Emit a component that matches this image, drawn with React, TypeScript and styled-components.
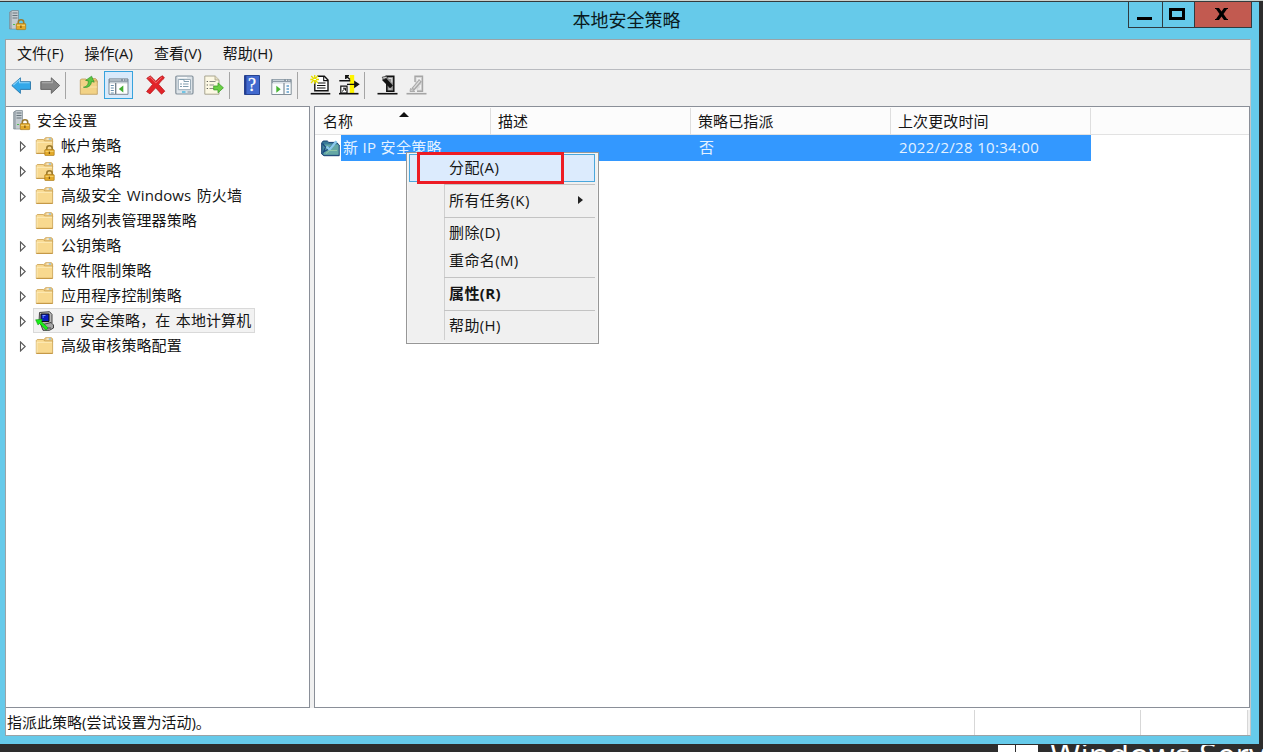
import React from "react";
import styled, { createGlobalStyle } from "styled-components";

const GlobalStyle = createGlobalStyle`
  * {
    box-sizing: border-box;
  }
  body {
    margin: 0;
    overflow: hidden;
    background-color: #2d2d2d;
    font-family: "Open Sans", "Noto Sans CJK SC", sans-serif;
    font-size: 15px;
    color: #151515;
  }
  svg {
    display: block;
    flex: none;
  }
`;

const Desktop = styled.div`
  position: relative;
  width: 1263px;
  height: 752px;
  overflow: hidden;
  background-color: #2d2d2d;
  border-top: 1px solid #cbd0cb;
`;

const Window = styled.div`
  display: flex;
  flex-direction: column;
  width: 1259px;
  height: 743px;
  padding: 0 8px 8px 5px;
  background-color: #66caea;
  border-top: 1px solid #343a3c;
`;

const TitleBar = styled.header`
  display: grid;
  grid-template-columns: 124px 1fr 124px;
  height: 37px;
  flex: none;
  margin-right: -1px;
`;

const TitleIcon = styled.div`
  padding: 8px 0 0 4px;
`;

const Title = styled.h1`
  margin: 0;
  padding-right: 4px;
  font-size: 18px;
  font-weight: 400;
  line-height: 37px;
  text-align: center;
  color: #0a1a20;
`;

const Controls = styled.div`
  display: flex;
  height: 26px;
  border: 1px solid #2f3b40;
  border-top: none;
`;

const Control = styled.button<{ $width: number; $close?: boolean }>`
  display: flex;
  align-items: center;
  justify-content: center;
  width: ${(props) => props.$width}px;
  padding: 0 3px 2px 0;
  border: none;
  border-left: ${(props) => (props.$width === 33 ? "none" : "1px solid #2f3b40")};
  background-color: ${(props) => (props.$close ? "#c25a50" : "transparent")};
`;

const Frame = styled.div`
  display: flex;
  flex-direction: column;
  flex: 1;
  min-height: 0;
  border: 1px solid #9ba3a7;
  border-right-color: #c3c7c9;
  background-color: #f0f0f0;
`;

const MenuBar = styled.nav`
  display: flex;
  align-items: center;
  gap: 21px;
  height: 30px;
  flex: none;
  padding: 0 0 2px 11px;
  border-bottom: 1px solid #b9bbc0;
`;

const MenuName = styled.span`
  font-size: 15px;
  line-height: 27px;
`;

const Toolbar = styled.div`
  display: flex;
  height: 36px;
  flex: none;
  padding: 1px 0 0 1px;
`;

const ToolButton = styled.div<{ $active?: boolean; $gap?: number }>`
  display: flex;
  align-items: center;
  justify-content: center;
  width: 29px;
  height: 28px;
  flex: none;
  margin-left: ${(props) => props.$gap ?? 0}px;
  background-color: ${(props) => (props.$active ? "#d8eafb" : "transparent")};
  box-shadow: ${(props) => (props.$active ? "inset 0 0 0 1px #37a3dd" : "none")};
`;

const ToolDivider = styled.div<{ $before?: number; $after?: number }>`
  width: 1px;
  height: 27px;
  flex: none;
  margin: 1px ${(props) => props.$after ?? 8}px 0 ${(props) => props.$before ?? 0}px;
  background-color: #a5a5a5;
`;

const Panes = styled.div`
  display: grid;
  grid-template-columns: 304px 1fr;
  column-gap: 4px;
  flex: 1;
  min-height: 0;
`;

const Tree = styled.aside`
  padding-top: 1px;
  border: 1px solid #8a8f98;
  border-left: none;
  background-color: #fff;
`;

const TreeRow = styled.div<{ $root?: boolean }>`
  display: flex;
  align-items: center;
  height: 25px;
  padding-left: ${(props) => (props.$root ? 7 : 13)}px;
`;

const Arrow = styled.div`
  width: 14px;
  padding-top: 2px;
  flex: none;
`;

const TreeLabel = styled.div<{ $selected?: boolean; $root?: boolean }>`
  display: flex;
  align-items: center;
  gap: 6px;
  height: 25px;
  padding: 0 4px 0 ${(props) => (props.$root ? 0 : 2)}px;
  word-spacing: 1.4px;
  letter-spacing: 0.1px;
  white-space: nowrap;
  background-color: ${(props) => (props.$selected ? "#f2f2f2" : "transparent")};
  box-shadow: ${(props) => (props.$selected ? "inset 0 0 0 1px #d9d9d9" : "none")};
`;

const TreeText = styled.span`
  padding-bottom: 2px;
`;

const List = styled.main`
  position: relative;
  border: 1px solid #8a8f98;
  background-color: #fff;
`;

const Columns = styled.div`
  display: grid;
  grid-template-columns: 175px 200px 200px 200px 1fr;
  height: 28px;
  padding: 1px 1px 0;
  border-bottom: 1px solid #e2e2e2;
  background-color: #fcfcfc;
`;

const Column = styled.div`
  position: relative;
  padding-left: 7px;
  line-height: 27px;
  letter-spacing: 0.1px;
  border-right: 1px solid #dedede;

  &:last-child {
    border-right: none;
  }
`;

const SortMark = styled.div`
  position: absolute;
  top: 4px;
  left: 83px;
  border: 5px solid transparent;
  border-top: none;
  border-bottom-color: #111;
`;

const ListRow = styled.div`
  display: flex;
  height: 26px;
  padding-left: 6px;
  align-items: center;
`;

const RowCells = styled.div`
  display: grid;
  grid-template-columns: 150px 200px 200px 200px;
  height: 26px;
  margin-left: 1px;
  line-height: 25px;
  letter-spacing: 0.32px;
  color: #e4f2ff;
  background-color: #3398ff;
`;

const Cell = styled.span<{ $first?: boolean }>`
  padding-left: ${(props) => (props.$first ? 2 : 8)}px;
  white-space: nowrap;
`;

const StatusBar = styled.footer`
  display: grid;
  grid-template-columns: 969px 166px 107px 1fr;
  height: 27px;
  flex: none;
  padding-top: 2px;
  background-color: #fff;
`;

const StatusPart = styled.div`
  padding-left: 1px;
  font-size: 15px;
  line-height: 24px;
  border-right: 1px solid #d7d7d7;

  &:last-child {
    border-right: none;
    background-color: #f0f0f0;
  }
`;

const ContextMenu = styled.div`
  position: absolute;
  top: 151px;
  left: 406px;
  width: 193px;
  height: 192px;
  padding: 1px 3px 1px 2px;
  border: 1px solid #979797;
  background: linear-gradient(#cfcfcf, #cfcfcf) 37px 31px / 1px 156px no-repeat #f0f0f0;
  box-shadow: inset 0 0 0 1px #f5f5f5;
`;

const MenuItem = styled.div<{ $active?: boolean; $bold?: boolean }>`
  display: flex;
  align-items: center;
  justify-content: space-between;
  height: 28px;
  padding: 0 12px 3px 40px;
  font-weight: ${(props) => (props.$bold ? 700 : 400)};
  letter-spacing: 0.38px;
  background-color: ${(props) => (props.$active ? "#dcebfd" : "transparent")};
  box-shadow: ${(props) => (props.$active ? "inset 0 0 0 1px #4aa7dc" : "none")};
`;

const MenuDivider = styled.div<{ $height: number }>`
  height: ${(props) => props.$height}px;
  padding: 2px 0 0 35px;

  &::after {
    content: "";
    display: block;
    height: 1px;
    background-color: #c3c3c3;
  }
`;

const Marker = styled.div`
  position: absolute;
  top: 151px;
  left: 417px;
  width: 147px;
  height: 32px;
  border: 3px solid #ed1c24;
`;

const Watermark = styled.div`
  position: absolute;
  top: 744px;
  left: 998px;
  display: flex;
  gap: 12px;
  height: 7px;
  overflow: hidden;
  font-family: "Open Sans", sans-serif;
  font-size: 33px;
  line-height: 20px;
  white-space: nowrap;
  color: #fff;
`;

const Flag = styled.div`
  display: grid;
  grid-template-columns: 17px 22px;
  gap: 1px;

  & > i {
    background-color: #fff;
  }
`;

const Lock = ({ x, y }: { x: number; y: number }) => (
  <g transform={`translate(${x} ${y})`}>
    <path d="M2.3 5V3.2C2.3 0 7.7 0 7.7 3.2V5" fill="none" stroke="#9b7a2e" strokeWidth="1.6" />
    <rect x="0.3" y="4.6" width="9.4" height="6" rx="0.7" fill="#e3aa2a" stroke="#a97818" strokeWidth="0.7" />
    <path d="M1 6.3H9" stroke="#f7d778" />
    <path d="M4.9 6.6V9" stroke="#7e5610" strokeWidth="1.3" />
  </g>
);

const ServerIcon = () => (
  <svg width="18" height="21" viewBox="0 0 18 21">
    <path d="M0.7 2L3 0.6H9.4V19H0.7Z" fill="#a5afb6" stroke="#77848c" strokeWidth="0.7" />
    <path d="M3 1H9V18.6H3Z" fill="#c4ccd1" />
    <path d="M3.5 3H8.5M3.5 5.5H8.5M3.5 8H8.5" stroke="#68757d" />
    <path d="M4 14.5H6" stroke="#50bd50" strokeWidth="1.2" />
    <Lock x={7} y={9} />
  </svg>
);

const FolderIcon = ({ locked }: { locked?: boolean }) => (
  <svg width="20" height="20" viewBox="0 0 20 20">
    <path d="M9 3.5L10.5 1.7H16.5L17.6 3V6H9Z" fill="#edc87c" stroke="#c79d4c" strokeWidth="0.8" />
    <path d="M11.5 3H16" stroke="#fff" />
    <path d="M13.8 3H16" stroke="#5ba9df" />
    <path d="M1.3 4.5L2.2 3.5H8.4L9.6 5H17.6V17.4H1.3Z" fill="#f8d98f" stroke="#cda65a" strokeWidth="0.9" />
    <path d="M2 6.3H17M2 5.5V16.8" stroke="#fdecb9" />
    <path d="M1.5 17.4H17.6" stroke="#c39642" />
    {locked && <Lock x={9.5} y={9} />}
  </svg>
);

const ComputerIcon = () => (
  <svg width="20" height="20" viewBox="0 0 20 20">
    <path d="M4.5 1.5L14.5 0.7L17 3.4V12L14 14H6L4 11Z" fill="#b8b8b8" stroke="#333" strokeWidth="0.9" />
    <path d="M6 3H14V10.5H6Z" fill="#0a1cc0" stroke="#111" />
    <path d="M7.5 4.5H10.5M7.5 6H9" stroke="#7b9cff" />
    <path d="M6 14L16 11.5L18.5 14V17L14.5 19.3H8Z" fill="#a5a5a5" stroke="#333" strokeWidth="0.9" />
    <path d="M10 17H16" stroke="#444" />
    <path d="M0.6 8.8L7.3 8.3L6.6 10.8L13 16.8L11.2 19.3L4.6 12.6L3 14Z" fill="#18ed18" stroke="#118411" strokeWidth="0.5" />
  </svg>
);

const PolicyIcon = () => (
  <svg width="19" height="17" viewBox="0 0 19 17">
    <path d="M0.7 3L2.2 1H6.3L7.8 2.4H15.5L18.2 5V15.7H3L0.7 14Z" fill="#397c99" stroke="#153e70" />
    <path d="M2.7 4.5H17.5V14.7H2.7Z" fill="#66a8a5" />
    <path d="M1.5 3.5L4.5 7L2.5 12L7.5 9L15 1.5" fill="none" stroke="#194882" strokeWidth="1.3" />
    <path d="M5.5 6.5L8.5 9.5L15.5 1.2" fill="none" stroke="#8bc9ed" strokeWidth="2.4" />
    <path d="M5 13.5L8.5 10.5H16" fill="none" stroke="#94c9a9" />
  </svg>
);

const Expander = () => (
  <svg width="8" height="11" viewBox="0 0 8 11">
    <path d="M1.5 1L6.2 5.5L1.5 10Z" fill="#fff" stroke="#595959" strokeWidth="1.1" />
  </svg>
);

const ToolIcon = ({ children }: { children: React.ReactNode }) => (
  <svg width="21" height="20" viewBox="0 0 21 20">
    {children}
  </svg>
);

const BackIcon = () => (
  <ToolIcon>
    <path d="M0.8 10.5L9.4 2.8V6.7H19.5V14.4H9.4V18.4Z" fill="#32a8e9" stroke="#2876a9" strokeWidth="0.9" strokeLinejoin="round" />
    <path d="M2.3 10.2L8.5 4.7V7.7H18.6" fill="none" stroke="#8cd4fa" strokeWidth="1.1" />
  </ToolIcon>
);

const ForwardIcon = () => (
  <ToolIcon>
    <path d="M19.7 10.5L11.3 2.8V6.7H0.8V14.4H11.3V18.4Z" fill="#858585" stroke="#606060" strokeWidth="0.9" strokeLinejoin="round" />
    <path d="M1.8 7.7H12.2V4.8" fill="none" stroke="#b4b4b4" strokeWidth="1.1" />
  </ToolIcon>
);

const UpIcon = () => (
  <ToolIcon>
    <path d="M9 5.5L11 3.5H16.5L18 5V8H9Z" fill="#e8c36f" stroke="#b9975a" strokeWidth="0.7" />
    <path d="M1.3 5L2.3 4H7L8.5 6H18.3V19.3H1.3Z" fill="#f2d286" stroke="#bd9b58" strokeWidth="0.8" />
    <path d="M2 12H18" stroke="#f9e4ac" />
    <path d="M4.4 12.2C8.7 11.5 9.3 8.8 9.4 5.9L6.6 5.4L12.6 1.2L15.2 7.2L12.5 6.4C12.2 10.7 9.2 13.2 4.4 12.2Z" fill="#5bc843" stroke="#36942d" strokeWidth="0.7" />
  </ToolIcon>
);

const ConsoleTreeIcon = () => (
  <ToolIcon>
    <path d="M1 4H20V19.3H1Z" fill="#fff" stroke="#7d8994" />
    <path d="M1 3.7H20V8.2H1Z" fill="#8795a1" />
    <path d="M2 5H13M2 7.3H19.5" stroke="#d4dce3" />
    <path d="M15 5H16M17.5 5H18.5" stroke="#fff" />
    <path d="M7.7 8V19" stroke="#6f7c86" strokeWidth="1.3" />
    <path d="M2.8 10.5H5.8M2.8 13H5.8M2.8 15.5H5.8M2.8 18H5.8" stroke="#6990ad" />
    <path d="M15.3 10.5V17.5L10.8 14Z" fill="#43ad32" />
  </ToolIcon>
);

const DeleteIcon = () => (
  <ToolIcon>
    <path d="M1.8 3.3L5.3 0.9C7.2 2.5 8.8 4 10.8 6.4C13 3.5 15 2 17.6 0.8L19.4 3C17.3 4.8 15.5 6.7 13.6 9.3L19.8 16.2L16.5 19.2L10.7 12.8L5 18.9L1.6 16.6L7.6 9.4Z" fill="#e32429" stroke="#b9181d" strokeWidth="0.8" />
    <path d="M3.5 3.2L5.2 2.2L10.8 8L16.8 2.4" fill="none" stroke="#f0696b" strokeWidth="1" />
  </ToolIcon>
);

const PropertiesIcon = () => (
  <ToolIcon>
    <rect x="1.8" y="1" width="17.2" height="18" rx="1.3" fill="#dce3e8" stroke="#84919b" strokeWidth="1.2" />
    <path d="M4.3 4.5H16.5V14.7H4.3Z" fill="#fff" stroke="#9aabb7" />
    <path d="M6 4.5H10V6.5H15M6 9H8M9 9H14.5M6 11.5H8M9 11.5H14.5" fill="none" stroke="#829eaf" />
    <path d="M4 2.7H13" stroke="#fff" />
    <path d="M8 17H11.5" stroke="#43b6e2" strokeWidth="1.4" />
    <path d="M13.5 17H17" stroke="#9da8b0" strokeWidth="1.4" />
  </ToolIcon>
);

const ExportIcon = () => (
  <ToolIcon>
    <path d="M1.8 1H12.2L16 4.8V19.2H1.8Z" fill="#fcf8e4" stroke="#9f9c87" strokeWidth="0.9" />
    <path d="M12 1V5H16" fill="#e4dec1" stroke="#aaa58c" strokeWidth="0.8" />
    <path d="M3.7 6.5H5M3.7 10H5M3.7 13.5H5" stroke="#62625c" strokeWidth="1.2" />
    <path d="M6.5 6.5H12.5M6.5 10H11M6.5 13.5H11" stroke="#8b8c87" />
    <path d="M10.7 11H15V7.9L20.4 12.8L15 17.8V14.9H10.7Z" fill="#6ad044" stroke="#3e9e29" strokeWidth="0.8" />
  </ToolIcon>
);

const HelpIcon = () => (
  <ToolIcon>
    <path d="M2.5 0.5H17.5V19.5H2.5Z" fill="#4169ce" stroke="#284491" />
    <path d="M3.6 1V19" stroke="#243e91" strokeWidth="1.6" />
    <text x="6" y="16" fontFamily="Liberation Serif, serif" fontSize="18" fill="#fff" stroke="#fff" strokeWidth="0.3">?</text>
  </ToolIcon>
);

const ActionPaneIcon = () => (
  <ToolIcon>
    <path d="M0.8 4.5H20.2V19.5H0.8Z" fill="#fafcfd" stroke="#83909a" />
    <path d="M0.8 4.2H20.2V8.2H0.8Z" fill="#8d9aa5" />
    <path d="M2 5.3H13M2 7.5H19.5" stroke="#d8e0e6" />
    <path d="M15 5.3H16M17.5 5.3H18.5" stroke="#fff" />
    <path d="M13 8V19" stroke="#7c8a94" strokeWidth="1.2" />
    <path d="M15.5 11H18M15.5 14H18M15.5 17H18" stroke="#5f9dca" strokeWidth="1.3" />
    <path d="M5.3 10.7V17.7L9.7 14.2Z" fill="#48b533" />
  </ToolIcon>
);

const NewPolicyIcon = () => (
  <ToolIcon>
    <path d="M7 1.2H14.3L18 5V15.8H4.8V6" fill="#fff" stroke="#111" strokeWidth="1.4" />
    <path d="M13.7 1.2V5.6H18M8 8H15.5M7 10.5H15.5M7 13H15.5" fill="none" stroke="#111" strokeWidth="1.1" />
    <path d="M0.7 18.7H20.3" stroke="#111" strokeWidth="1.6" />
    <path d="M0.3 4.5H9M1.2 1L8 8M4.7 0V8.7M8 0.8L1 8" stroke="#e6df00" strokeWidth="1.3" />
    <path d="M3.5 4.5H6" stroke="#fff" />
  </ToolIcon>
);

const FilterIcon = () => (
  <ToolIcon>
    <path d="M10.8 0H15.2V19H10.8Z" fill="#fff500" />
    <path d="M6.8 4V0.8H10M7 1L11 4.5M0.3 5.7H11.3" fill="none" stroke="#111" strokeWidth="1.5" />
    <path d="M8 9.3H18M15.8 6.7L19.6 9.3L15.8 12Z" fill="#111" stroke="#111" strokeWidth="1.3" />
    <path d="M1.8 11.2H8V18H1.8Z" fill="#fff" stroke="#111" strokeWidth="1.2" />
    <path d="M3 16.5L6.3 13.3M4 13.2H6.5V15.7" fill="none" stroke="#111" />
    <path d="M0 18.7H19.5" stroke="#111" strokeWidth="1.6" />
  </ToolIcon>
);

const AssignIcon = () => (
  <ToolIcon>
    <path d="M8.5 1.2H16.8V16.3H9.8V7" fill="#8d8d8d" stroke="#111" strokeWidth="1.5" />
    <path d="M11.5 3.5H14.8V7.5M11.5 14H14.5" fill="none" stroke="#ddd" strokeWidth="1.1" />
    <path d="M6.5 3.5L14.5 11.8" stroke="#111" strokeWidth="4" />
    <path d="M5.2 2.2L9.5 1.2L10.5 2.8L6.5 4.5Z" fill="#d0d0d0" stroke="#333" strokeWidth="0.8" />
    <path d="M0.5 18.7H20.5" stroke="#111" strokeWidth="1.6" />
  </ToolIcon>
);

const UnassignIcon = () => (
  <ToolIcon>
    <path d="M9 7V1.2H16.5V16.3H11" fill="#d9d9d9" stroke="#a6a6a6" strokeWidth="1.4" />
    <path d="M11.2 6V3.5H14.3V6M14.3 10V14H12" fill="none" stroke="#f4f4f4" strokeWidth="1.1" />
    <path d="M14.5 5.5L6.8 14.5" stroke="#a8a8a8" strokeWidth="3.6" />
    <path d="M13.8 6L7.5 13.3" stroke="#dedede" strokeWidth="1.2" />
    <path d="M4.5 13.5L8.8 16.5H4Z" fill="#ccc" stroke="#a6a6a6" strokeWidth="0.9" />
    <path d="M0.5 18.7H20.5" stroke="#a4a4a4" strokeWidth="1.6" />
  </ToolIcon>
);

const menus = ["文件(F)", "操作(A)", "查看(V)", "帮助(H)"];

const treeItems = [
  { name: "帐户策略", icon: <FolderIcon locked />, expandable: true },
  { name: "本地策略", icon: <FolderIcon locked />, expandable: true },
  { name: "高级安全 Windows 防火墙", icon: <FolderIcon />, expandable: true },
  { name: "网络列表管理器策略", icon: <FolderIcon />, expandable: false },
  { name: "公钥策略", icon: <FolderIcon />, expandable: true },
  { name: "软件限制策略", icon: <FolderIcon />, expandable: true },
  { name: "应用程序控制策略", icon: <FolderIcon />, expandable: true },
  { name: "IP 安全策略，在 本地计算机", icon: <ComputerIcon />, expandable: true, selected: true },
  { name: "高级审核策略配置", icon: <FolderIcon />, expandable: true },
];

const App: React.FC = () => {
  return (
    <>
      <GlobalStyle />
      <Desktop>
        <Window>
          <TitleBar>
            <TitleIcon>
              <ServerIcon />
            </TitleIcon>
            <Title>本地安全策略</Title>
            <Controls>
              <Control $width={33} aria-label="minimize">
                <svg width="15" height="12" viewBox="0 0 15 12">
                  <path d="M0 10.5H15" stroke="#000" strokeWidth="3" />
                </svg>
              </Control>
              <Control $width={32} aria-label="maximize">
                <svg width="16" height="12" viewBox="0 0 16 12">
                  <path d="M1.5 1.5H14.5V10.5H1.5Z" fill="none" stroke="#000" strokeWidth="3" />
                </svg>
              </Control>
              <Control $width={57} $close aria-label="close">
                <svg width="13" height="12" viewBox="0 0 13 12">
                  <path d="M0 0H4L6.5 3.5L9 0H13V1H12L8.5 6L12 11H13V12H9L6.5 8.5L4 12H0V11H1L4.5 6L1 1H0Z" />
                </svg>
              </Control>
            </Controls>
          </TitleBar>
          <Frame>
            <MenuBar>
              {menus.map((name) => (
                <MenuName key={name}>{name}</MenuName>
              ))}
            </MenuBar>
            <Toolbar>
              <ToolButton><BackIcon /></ToolButton>
              <ToolButton><ForwardIcon /></ToolButton>
              <ToolDivider $after={9} />
              <ToolButton><UpIcon /></ToolButton>
              <ToolButton $active><ConsoleTreeIcon /></ToolButton>
              <ToolButton $gap={8}><DeleteIcon /></ToolButton>
              <ToolButton><PropertiesIcon /></ToolButton>
              <ToolButton><ExportIcon /></ToolButton>
              <ToolDivider $before={1} />
              <ToolButton><HelpIcon /></ToolButton>
              <ToolButton><ActionPaneIcon /></ToolButton>
              <ToolDivider $before={1} />
              <ToolButton><NewPolicyIcon /></ToolButton>
              <ToolButton><FilterIcon /></ToolButton>
              <ToolDivider />
              <ToolButton><AssignIcon /></ToolButton>
              <ToolButton><UnassignIcon /></ToolButton>
            </Toolbar>
            <Panes>
              <Tree>
                <TreeRow $root>
                  <TreeLabel $root>
                    <ServerIcon />
                    <TreeText>安全设置</TreeText>
                  </TreeLabel>
                </TreeRow>
                {treeItems.map((item) => (
                  <TreeRow key={item.name}>
                    <Arrow>{item.expandable && <Expander />}</Arrow>
                    <TreeLabel $selected={item.selected}>
                      {item.icon}
                      <TreeText>{item.name}</TreeText>
                    </TreeLabel>
                  </TreeRow>
                ))}
              </Tree>
              <List>
                <Columns>
                  <Column>
                    名称
                    <SortMark />
                  </Column>
                  <Column>描述</Column>
                  <Column>策略已指派</Column>
                  <Column>上次更改时间</Column>
                  <Column />
                </Columns>
                <ListRow>
                  <PolicyIcon />
                  <RowCells>
                    <Cell $first>新 IP 安全策略</Cell>
                    <Cell />
                    <Cell>否</Cell>
                    <Cell>2022/2/28 10:34:00</Cell>
                  </RowCells>
                </ListRow>
              </List>
            </Panes>
            <StatusBar>
              <StatusPart>指派此策略(尝试设置为活动)。</StatusPart>
              <StatusPart />
              <StatusPart />
              <StatusPart />
            </StatusBar>
          </Frame>
        </Window>
        <ContextMenu>
          <MenuItem $active>分配(A)</MenuItem>
          <MenuDivider $height={5} />
          <MenuItem>
            所有任务(K)
            <svg width="5" height="8" viewBox="0 0 5 8">
              <path d="M0 0L5 4L0 8Z" fill="#222" />
            </svg>
          </MenuItem>
          <MenuDivider $height={4} />
          <MenuItem>删除(D)</MenuItem>
          <MenuItem>重命名(M)</MenuItem>
          <MenuDivider $height={5} />
          <MenuItem $bold>属性(R)</MenuItem>
          <MenuDivider $height={4} />
          <MenuItem>帮助(H)</MenuItem>
        </ContextMenu>
        <Marker />
        <Watermark>
          <Flag>
            <i />
            <i />
          </Flag>
          Windows Serv
        </Watermark>
      </Desktop>
    </>
  );
};

export default App;
